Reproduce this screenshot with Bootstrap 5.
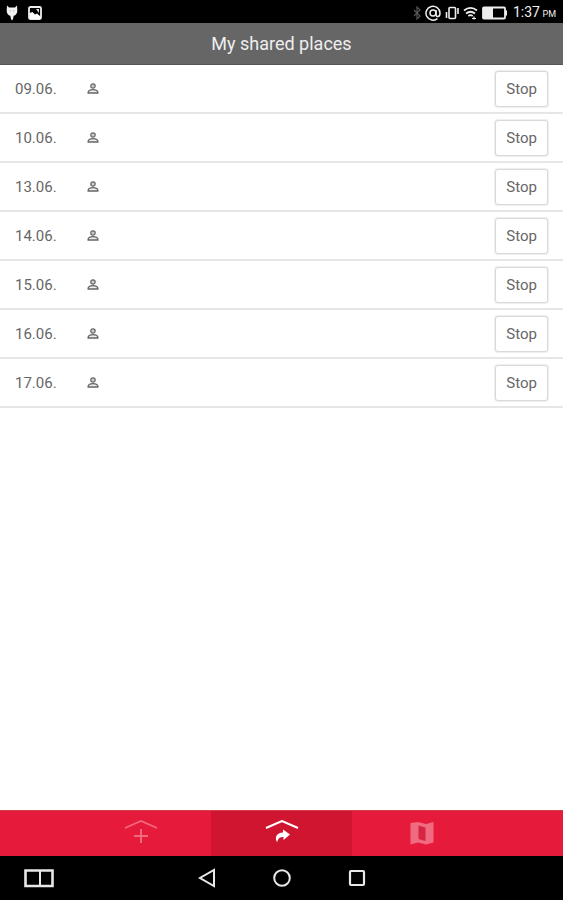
<!DOCTYPE html>
<html lang="en">
<head>
<meta charset="utf-8">
<meta name="viewport" content="width=device-width, initial-scale=1">
<title>My shared places</title>
<link href="https://cdn.jsdelivr.net/npm/bootstrap@5.3.0/dist/css/bootstrap.min.css" rel="stylesheet">
<style>
  body { font-family: Roboto, "Liberation Sans", sans-serif; font-size: 15px; background: #fff; color: #666; }
  svg { display: block; flex: none; }
  .status-bar { background: #000; color: #f0f0f0; height: 23px; padding: 2px 7px 0 4px; }
  .status-clock { font-size: 14px; line-height: 20px; margin-left: 6px; }
  .status-clock small { font-size: 9px; margin-left: -1px; }
  .app-title { background: #666; color: #eee; font-size: 18px; line-height: 42px; border-bottom: 1px solid #555; height: 42px; }
  .place-row { height: 49px; padding: 0 15px; border-bottom: 2px solid #e6e6e6; }
  .place-date { width: 72px; line-height: 20px; }
  .btn-stop { --bs-btn-font-size: 15px; --bs-btn-line-height: 20px; --bs-btn-padding-x: 10px; --bs-btn-padding-y: 7px;
    --bs-btn-color: #666; --bs-btn-bg: #fff; --bs-btn-border-color: #d9d9d9; --bs-btn-border-width: 1px; --bs-btn-border-radius: 3px;
    --bs-btn-hover-color: #444; --bs-btn-hover-bg: #f4f4f4; --bs-btn-hover-border-color: #ccc;
    box-shadow: 0 0 1px 1px #eee; }
  .tab-bar { background: #e61a3a; height: 46px; border-top: 1px solid #d43a50; }
  .tab-link { color: #f06a80; }
  .tab-link.active { background: #d01530; color: #fff; }
  .system-bar { background: #000; height: 44px; display: grid; grid-template-columns: 1fr auto 1fr; align-items: center; }
  .system-bar button { color: #e8e8e8; }
  .system-keys { gap: 55px; }
</style>
<script src="https://cdn.jsdelivr.net/npm/bootstrap@5.3.0/dist/js/bootstrap.bundle.min.js" defer></script>
</head>
<body>
<svg class="d-none" aria-hidden="true">
  <symbol id="person" viewBox="0 0 12 12">
    <circle cx="6" cy="3" r="2.200" fill="#ccc" stroke="currentColor" stroke-width="1.200"/>
    <path d="M1.200 10V9C1.600 7.400 3.400 6.600 6 6.600s4.400.8 4.800 2.400V10z" fill="#eee" stroke="currentColor" stroke-width="1.400"/>
  </symbol>
</svg>
<div class="d-flex flex-column min-vh-100">
  <div class="status-bar d-flex align-items-center justify-content-between">
    <div class="d-flex align-items-center gap-2">
      <svg width="16" height="18" viewBox="0 0 16 18" fill="#f2f2f2"><path d="M3 1.500 5 3.500h6l2-2 .3 5c0 3-1.400 4.800-3.600 5.200L9 15l-1 1.500L7 15l-.700-3.300C4.100 11.300 2.700 9.500 2.700 6.500z"/><circle cx="6.200" cy="6.800" r=".6" fill="#999"/><circle cx="9.800" cy="6.800" r=".6" fill="#999"/></svg>
      <svg width="14" height="14" viewBox="0 0 14 14"><rect x="1" y="1" width="12" height="12" rx="1.500" fill="none" stroke="#eee" stroke-width="1.800"/><path d="M1.500 7 4.500 6l2.500 2.500L9 7.500l3.500 3V13h-11z" fill="#fff"/><path d="M8 3h3v4z" fill="#ddd"/></svg>
    </div>
    <div class="d-flex align-items-center">
      <svg width="8" height="14" viewBox="0 0 8 14" fill="none" stroke="#555" stroke-width="1.200"><path d="M1 4l6 6-3 3V1l3 3-6 6"/></svg>
      <svg class="ms-1" width="16" height="16" viewBox="0 0 16 16" fill="none" stroke="#eee" stroke-width="1.500"><path d="M12.500 13.600A7 7 0 1 1 15 8c0 2.400-1 3.600-2.300 3.600S11 10.600 11 9V5"/><circle cx="8" cy="8" r="3"/></svg>
      <svg class="ms-1" width="14" height="14" viewBox="0 0 14 14" fill="none" stroke="#eee" stroke-width="1.600"><rect x="4" y="1.500" width="6.500" height="11" rx="1"/><path d="M1.500 6v6M13 2v6"/></svg>
      <svg class="ms-1" width="15" height="14" viewBox="0 0 15 14" fill="none" stroke="#eee" stroke-width="1.800"><path d="M1 4.500C5 1.200 10 1.200 14 4.500M3 7.500c3-2.300 6-2.300 9 0M5.300 10c1.500-1.100 2.900-1.100 4.400 0"/><path d="M9 12.500h4M11 10.500v3" stroke-width="1.200"/></svg>
      <svg class="ms-1" width="25" height="14" viewBox="0 0 25 14"><rect x="1" y="1.500" width="22" height="11" rx="1" fill="none" stroke="#eee" stroke-width="1.800"/><path d="M1 1.500h10v11H1z" fill="#eee"/><path d="M23 4.500h2v5h-2z" fill="#eee"/></svg>
      <span class="status-clock">1:37 <small>PM</small></span>
    </div>
  </div>
  <h1 class="app-title text-center fw-normal m-0">My shared places</h1>
  <main class="flex-grow-1">
    <ul class="list-unstyled m-0">
      <li class="place-row d-flex align-items-center"><span class="place-date">09.06.</span><svg width="12" height="12"><use href="#person"/></svg><button type="button" class="btn btn-stop ms-auto">Stop</button></li>
      <li class="place-row d-flex align-items-center"><span class="place-date">10.06.</span><svg width="12" height="12"><use href="#person"/></svg><button type="button" class="btn btn-stop ms-auto">Stop</button></li>
      <li class="place-row d-flex align-items-center"><span class="place-date">13.06.</span><svg width="12" height="12"><use href="#person"/></svg><button type="button" class="btn btn-stop ms-auto">Stop</button></li>
      <li class="place-row d-flex align-items-center"><span class="place-date">14.06.</span><svg width="12" height="12"><use href="#person"/></svg><button type="button" class="btn btn-stop ms-auto">Stop</button></li>
      <li class="place-row d-flex align-items-center"><span class="place-date">15.06.</span><svg width="12" height="12"><use href="#person"/></svg><button type="button" class="btn btn-stop ms-auto">Stop</button></li>
      <li class="place-row d-flex align-items-center"><span class="place-date">16.06.</span><svg width="12" height="12"><use href="#person"/></svg><button type="button" class="btn btn-stop ms-auto">Stop</button></li>
      <li class="place-row d-flex align-items-center"><span class="place-date">17.06.</span><svg width="12" height="12"><use href="#person"/></svg><button type="button" class="btn btn-stop ms-auto">Stop</button></li>
    </ul>
  </main>
  <nav class="tab-bar d-flex justify-content-center" aria-label="Sections">
    <a href="#add" class="tab-link w-25 d-flex align-items-center justify-content-center" aria-label="Add place">
      <svg width="34" height="28" viewBox="0 0 34 28" fill="none" stroke="currentColor"><path d="M1 8 17 1l16 7" stroke-width="1.700"/><path d="M17 9v14M10 16h14" stroke-width="2"/></svg>
    </a>
    <a href="#shared" class="tab-link active w-25 d-flex align-items-center justify-content-center" aria-label="Shared places" aria-current="page">
      <svg width="34" height="28" viewBox="0 0 34 28"><path d="M1 8 17 1l16 7" fill="none" stroke="currentColor" stroke-width="2"/><path d="M18 9.500 25 14.500 18.500 20v-3c-3.500 0-5.500 1.200-6.300 5.200-3.200-4.500-.5-9.700 5.800-9.700z" fill="currentColor"/></svg>
    </a>
    <a href="#map" class="tab-link w-25 d-flex align-items-center justify-content-center" aria-label="Map">
      <svg width="24" height="24" viewBox="0 0 24 24"><path d="M.5 1 8 0 16 2l7.500-2V20.500L16 22.500 8 20.500 .5 22.500z" fill="currentColor"/><path d="M8.500 3.500 15.500 5.500v13.500L8.500 17z" fill="#d42542"/></svg>
    </a>
  </nav>
  <div class="system-bar">
    <div class="d-flex ps-4"><button type="button" class="btn p-0 border-0" aria-label="Split screen"><svg width="30" height="20" viewBox="0 0 30 20" fill="none" stroke="currentColor"><path d="M1.500 2.500h27v15.500h-27z" stroke-width="2.600"/><path d="M16 2v16" stroke-width="2"/></svg></button></div>
    <div class="system-keys d-flex">
      <button type="button" class="btn p-0 border-0" aria-label="Back"><svg width="20" height="20" viewBox="0 0 20 20" fill="none" stroke="currentColor" stroke-width="2"><path d="M17 2v16L3 10z"/></svg></button>
      <button type="button" class="btn p-0 border-0" aria-label="Home"><svg width="20" height="20" viewBox="0 0 20 20" fill="none" stroke="currentColor" stroke-width="2"><circle cx="10" cy="10" r="7.800"/></svg></button>
      <button type="button" class="btn p-0 border-0" aria-label="Recent apps"><svg width="20" height="20" viewBox="0 0 20 20" fill="none" stroke="currentColor" stroke-width="2.200"><rect x="3" y="3" width="14" height="14" rx="1"/></svg></button>
    </div>
    <div></div>
  </div>
</div>
</body>
</html>
